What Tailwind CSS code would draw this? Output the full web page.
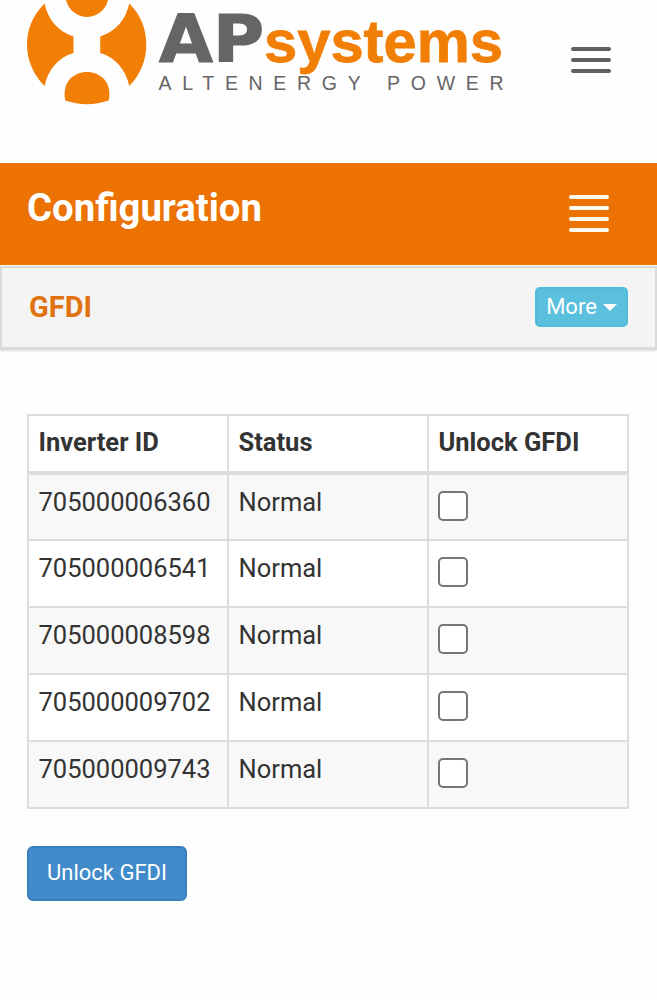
<!DOCTYPE html>
<html lang="en">
<head>
    <meta charset="UTF-8">
    <meta name="viewport" content="width=device-width, initial-scale=1.0">
    <title>GFDI - Configuration</title>
    <script src="https://cdn.jsdelivr.net/npm/@tailwindcss/browser@4"></script>
</head>
<body class="bg-[#fefefe] text-[#333] font-['Roboto',sans-serif] overflow-x-hidden">
    <!-- Header -->
    <header class="flex justify-between h-[163px] pr-[46px]">
        <svg class="block" width="520" height="110" viewBox="0 0 520 110">
            <g fill="#f27f05">
                <path d="M44.5 3.5 C33 15 27 29 27 44.5 C27 60 33 74 44.5 86 C48 70 58 57.500 73.5 53 V36.5 C58 31.500 48 19.500 44.5 3.5 Z" />
                <path d="M129.3 3.5 C140.8 15 146.3 29 146.3 44.5 C146.3 60 140.8 74 129.3 86 C125.8 70 115.8 57.500 100.2 53 V36.5 C115.8 31.500 125.8 19.500 129.3 3.5 Z" />
                <path d="M65.5 -5 A21.5 22 0 0 0 108.5 -5 Z" />
                <path d="M65.3 100.5 C61.5 82 74 72 87 72 C100 72 112.500 82 108.7 100.5 Q98 104.2 87 104.2 Q76 104.2 65.3 100.5 Z" />
            </g>
            <text x="159" y="61.5" font-family="DejaVu Sans" font-weight="700" font-size="66" textLength="105" lengthAdjust="spacingAndGlyphs" fill="#666467" stroke="#666467" stroke-width="1.2">AP</text>
            <text x="264" y="61.5" font-family="Liberation Sans" font-weight="700" font-size="59" textLength="239" lengthAdjust="spacingAndGlyphs" fill="#f27f05" stroke="#f27f05" stroke-width="0.8">systems</text>
            <text x="158.5" y="89.5" font-family="Liberation Sans" font-size="19.5" textLength="345" fill="#666467">ALTENERGY POWER</text>
        </svg>
        <button class="flex flex-col gap-[7px] mt-[47px] h-7">
            <span class="w-10 h-1 rounded-sm bg-[#5f5f5f]"></span>
            <span class="w-10 h-1 rounded-sm bg-[#5f5f5f]"></span>
            <span class="w-10 h-1 rounded-sm bg-[#5f5f5f]"></span>
        </button>
    </header>

    <!-- Page title -->
    <div class="flex justify-between h-[102px] pl-[27px] pr-12 bg-[#eb7203]">
        <h1 class="mt-[21px] text-[38.3px] leading-12 font-bold text-white">Configuration</h1>
        <button class="flex flex-col gap-[7px] mt-[32px] h-10">
            <span class="w-10 h-1 rounded-sm bg-[#fffaf0]"></span>
            <span class="w-10 h-1 rounded-sm bg-[#fffaf0]"></span>
            <span class="w-10 h-1 rounded-sm bg-[#fffaf0]"></span>
            <span class="w-10 h-1 rounded-sm bg-[#fffaf0]"></span>
        </button>
    </div>

    <!-- Section bar -->
    <div class="flex justify-between h-[84px] mt-px pl-[27px] pr-[27px] border-2 border-b-3 border-[#dadada] bg-[#f4f4f4] shadow-sm">
        <h2 class="mt-5 text-[29px] leading-[38px] font-bold text-[#e0730f]">GFDI</h2>
        <button class="flex items-center justify-center mt-[19px] w-[93px] h-10 gap-[6px] rounded-[5px] border-2 border-[#50bbdb] bg-[#5bc0de] pb-0.5 text-[22px] text-white">
            More
            <span class="border-x-[7px] border-t-[7px] border-x-transparent border-t-white mt-[3px]"></span>
        </button>
    </div>

    <!-- Inverter list -->
    <main class="pl-[27px] pr-[27px] pt-[64px]">
        <table class="w-[602px] table-fixed border-collapse border-2 border-[#ddd] text-[25.5px] leading-9">
            <thead>
                <tr class="h-[58px] align-top text-left border-b-4 border-[#ddd] bg-white">
                    <th class="border-x-2 border-[#ddd] pl-[9.5px] pt-2">Inverter ID</th>
                    <th class="border-x-2 border-[#ddd] pl-[9.5px] pt-2">Status</th>
                    <th class="border-x-2 border-[#ddd] pl-[9.5px] pt-2">Unlock GFDI</th>
                </tr>
            </thead>
            <tbody id="inverters"></tbody>
        </table>
        <button class="mt-[37px] w-40 h-[55px] rounded-md border-2 border-[#3a7fbd] bg-[#428bca] pb-0.5 text-[22px] text-white">Unlock GFDI</button>
    </main>

    <script>
        const inverters = ['705000006360', '705000006541', '705000008598', '705000009702', '705000009743'];
        document.getElementById('inverters').innerHTML = inverters.map(id => `
            <tr class="h-[67px] align-top odd:bg-[#f8f8f8] even:bg-white">
                <td class="border-2 border-[#ddd] pl-[9.5px] pt-[9px]">${id}</td>
                <td class="border-2 border-[#ddd] pl-[9.5px] pt-[9px]">Normal</td>
                <td class="border-2 border-[#ddd] pl-[9px] pt-4">
                    <input type="checkbox" class="block appearance-none size-[30px] rounded-[5px] border-2 border-[#767676] bg-white">
                </td>
            </tr>
        `).join('');
    </script>
</body>
</html>
